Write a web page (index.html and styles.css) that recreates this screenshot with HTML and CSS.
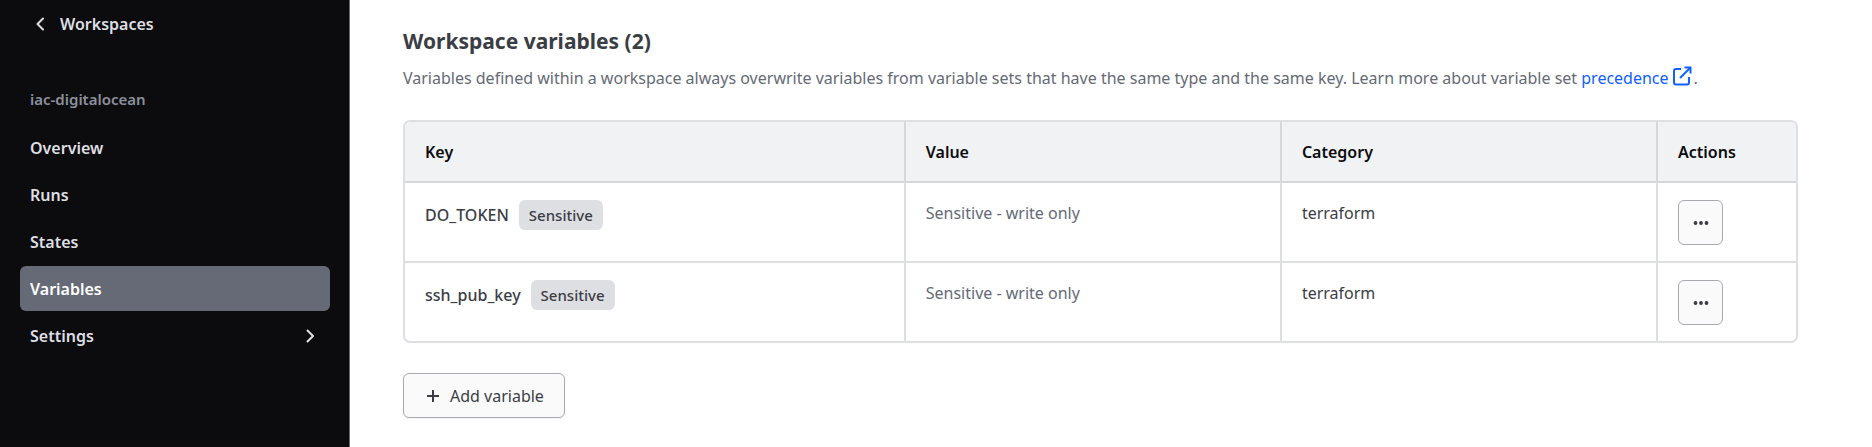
FILE: index.html
```html
<!DOCTYPE html>
<html lang="en">
<head>
<meta charset="utf-8">
<title>Workspace variables</title>
<meta name="viewport" content="width=device-width, initial-scale=1">
<link rel="stylesheet" href="styles.css">
</head>
<body>
<div class="app">
  <aside class="sidebar">
    <a class="back" href="#workspaces">
      <svg class="icon icon-back" viewBox="0 0 20 20" aria-hidden="true"><path d="M13 4.5 7.5 10l5.500 5.500"/></svg>
      <span>Workspaces</span>
    </a>
    <h2 class="nav-title">iac-digitalocean</h2>
    <nav class="nav" aria-label="Workspace">
      <a class="nav-item" href="#overview">Overview</a>
      <a class="nav-item" href="#runs">Runs</a>
      <a class="nav-item" href="#states">States</a>
      <a class="nav-item nav-item-active" href="#variables" aria-current="page">Variables</a>
      <a class="nav-item" href="#settings">Settings
        <svg class="icon" viewBox="0 0 20 20" aria-hidden="true"><path d="M7.500 4.500 13 10 7.500 15.500"/></svg>
      </a>
    </nav>
  </aside>
  <main class="main">
    <h1 class="title">Workspace variables (2)</h1>
    <p class="intro">Variables defined within a workspace always overwrite variables from variable sets that have the same type and the same key. Learn more about variable set <a class="link" href="#precedence">precedence<svg class="icon-external" viewBox="0 0 20 20" aria-hidden="true"><path d="M9 3H4a2 2 0 0 0-2 2v11.500a2 2 0 0 0 2 2h11a2 2 0 0 0 2-2V11"/><path d="M12.500 1.500H18.500V7.500"/><path d="M18 2 8 12"/></svg></a>.</p>
    <table class="table">
      <colgroup><col class="col-key"><col class="col-mid"><col class="col-mid"><col class="col-actions"></colgroup>
      <thead>
        <tr><th scope="col">Key</th><th scope="col">Value</th><th scope="col">Category</th><th scope="col">Actions</th></tr>
      </thead>
      <tbody>
        <tr>
          <td><div class="key"><span>DO_TOKEN</span><span class="badge">Sensitive</span></div></td>
          <td class="muted">Sensitive - write only</td>
          <td>terraform</td>
          <td><button class="button button-more" type="button" aria-label="Actions for DO_TOKEN"><svg class="dots" viewBox="0 0 16 16" aria-hidden="true"><circle cx="2.500" cy="8" r="1.900"/><circle cx="8" cy="8" r="1.900"/><circle cx="13.500" cy="8" r="1.900"/></svg></button></td>
        </tr>
        <tr>
          <td><div class="key"><span>ssh_pub_key</span><span class="badge">Sensitive</span></div></td>
          <td class="muted">Sensitive - write only</td>
          <td>terraform</td>
          <td><button class="button button-more" type="button" aria-label="Actions for ssh_pub_key"><svg class="dots" viewBox="0 0 16 16" aria-hidden="true"><circle cx="2.500" cy="8" r="1.900"/><circle cx="8" cy="8" r="1.900"/><circle cx="13.500" cy="8" r="1.900"/></svg></button></td>
        </tr>
      </tbody>
    </table>
    <button class="button button-add" type="button">
      <svg class="icon-plus" viewBox="0 0 14 14" aria-hidden="true"><path d="M7 1v12M1 7h12"/></svg>
      Add variable
    </button>
  </main>
</div>
</body>
</html>
```
FILE: styles.css
```css
* { box-sizing: border-box; }

body {
  margin: 0;
  background: #fff;
  color: #3b3d45;
  font: 16px/24px "Segoe UI", "Noto Sans", "Open Sans", sans-serif;
}

.app {
  display: grid;
  grid-template-columns: 350px minmax(0, 1fr);
  min-height: 100vh;
}

.sidebar {
  padding: 12px 19px 12px 20px;
  background: #0c0c0e;
  border-right: 1px solid #656a76;
  color: #dedfe3;
  font-weight: 600;
}

.back {
  display: flex;
  align-items: center;
  gap: 10px;
  padding: 0 10px;
  color: inherit;
  text-decoration: none;
}

.icon {
  width: 20px;
  height: 20px;
  fill: none;
  stroke: currentColor;
  stroke-width: 2;
  stroke-linecap: round;
  stroke-linejoin: round;
}

.nav-title {
  margin: 51px 0 14px;
  padding: 0 10px;
  color: #8c909c;
  font-size: 15px;
  font-weight: 600;
  line-height: 24px;
}

.nav {
  display: flex;
  flex-direction: column;
  gap: 2px;
}

.nav-item {
  display: flex;
  align-items: center;
  justify-content: space-between;
  height: 45px;
  padding: 0 10px;
  border-radius: 6px;
  color: inherit;
  text-decoration: none;
}

.nav-item-active {
  background: #656a76;
  color: #fff;
}

.main {
  padding: 24px 74px 24px 53px;
}

.title {
  margin: 0;
  font-size: 21px;
  font-weight: 700;
  line-height: 34px;
}

.intro {
  margin: 8px 0 30px;
  color: #656a76;
}

.link {
  color: #1060ff;
  text-decoration: none;
}

.icon-external {
  width: 20px;
  height: 20px;
  margin: 0 2px 0 3px;
  vertical-align: -2px;
  fill: none;
  stroke: currentColor;
  stroke-width: 2;
}

.table {
  width: 100%;
  table-layout: fixed;
  border: 2px solid #dedfe3;
  border-radius: 7px;
  border-spacing: 0;
  overflow: hidden;
}

.col-key { width: 36%; }
.col-actions { width: 138px; }

.table th,
.table td {
  padding: 17px 20px 16px;
  border-right: 2px solid #dedfe3;
  border-bottom: 2px solid #dedfe3;
  line-height: 26px;
  text-align: left;
  vertical-align: top;
}

.table th {
  background: #f1f2f3;
  border-color: #d5d7db;
  color: #0c0c0e;
  font-weight: 600;
}

.table th:last-child,
.table td:last-child {
  border-right: 0;
}

.table tbody tr:last-child td {
  border-bottom: 0;
}

.table .muted {
  color: #656a76;
}

.key {
  display: flex;
  align-items: center;
  gap: 10px;
  font-weight: 500;
}

.badge {
  padding: 2px 10px;
  border-radius: 6px;
  background: #dedfe3;
  font-size: 15px;
  font-weight: 500;
}

.button {
  display: inline-flex;
  align-items: center;
  justify-content: center;
  height: 45px;
  border: 1px solid #a9aaaf;
  border-radius: 6px;
  background: #fafafa;
  color: #3b3d45;
  font: inherit;
  box-shadow: 0 1px 2px #656a761a;
}

.button-more {
  display: flex;
  width: 45px;
  padding: 0;
  box-shadow: none;
}

.dots {
  width: 16px;
  height: 16px;
  fill: currentColor;
}

.button-add {
  gap: 10px;
  margin-top: 30px;
  padding: 0 20px 0 22px;
}

.icon-plus {
  width: 14px;
  height: 14px;
  fill: none;
  stroke: currentColor;
  stroke-width: 2;
}
```
